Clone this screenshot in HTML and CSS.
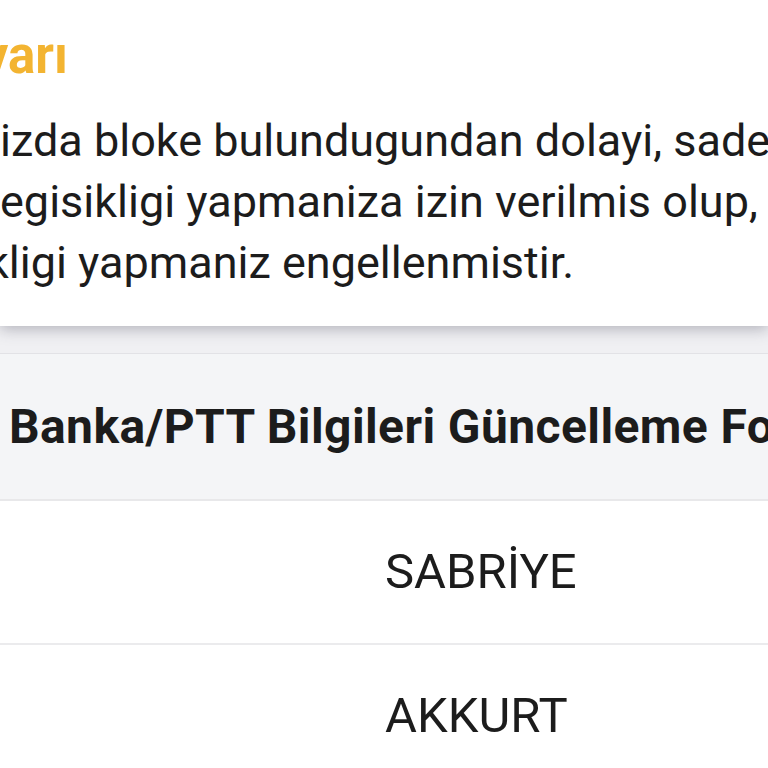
FILE: index.html
```html
<!DOCTYPE html>
<html>
  <head>
    <meta charset="UTF-8" />
    <title>Banka/PTT Bilgileri</title>
    <link rel="stylesheet" href="styles.css">
  </head>
  <body>
    <div class="screen">
      <div class="warning-card">
        <h2 class="warning-title">Uyarı</h2>
        <p class="warning-text">
          <span class="line">izda bloke bulundugundan dolayi, sadece</span>
          <span class="line">egisikligi yapmaniza izin verilmis olup,</span>
          <span class="line line-shift">kligi yapmaniz engellenmistir.</span>
        </p>
      </div>

      <div class="form-table">
        <div class="form-header">Banka/PTT Bilgileri Güncelleme Formu</div>
        <div class="form-row">
          <span class="form-label"></span>
          <span class="form-value">SABRİYE</span>
        </div>
        <div class="form-row">
          <span class="form-label"></span>
          <span class="form-value">AKKURT</span>
        </div>
      </div>
    </div>
  </body>
</html>
```

FILE: styles.css
```css
* {
  margin: 0;
  padding: 0;
  box-sizing: border-box;
}

html,
body {
  width: 768px;
  height: 768px;
  overflow: hidden;
}

body {
  font-family: Roboto, "Noto Sans", sans-serif;
  background: #f0f0f3;
  color: #1c1c1c;
}

.screen {
  width: 768px;
}

.warning-card {
  background: white;
  padding: 26px 0 33px;
  height: 326px;
  box-shadow: 0 3px 14px rgba(60, 60, 80, 0.35);
  position: relative;
  overflow: hidden;
}

.warning-title {
  font-size: 51px;
  font-weight: 700;
  line-height: 60px;
  color: #f3b431;
  margin-left: -51px;
  white-space: nowrap;
}

.warning-text {
  margin-top: 24px;
  font-size: 45px;
  line-height: 61px;
  color: #1c1c1c;
}

.warning-text .line {
  display: block;
  white-space: nowrap;
}

.warning-text .line-shift {
  margin-left: -14px;
}

.form-table {
  margin-top: 27px;
  background: white;
  border-top: 1px solid #e2e2e6;
}

.form-header {
  height: 147px;
  line-height: 146px;
  padding-left: 9px;
  background: #f4f5f7;
  border-bottom: 2px solid #e8e8ea;
  font-size: 48px;
  font-weight: 700;
  letter-spacing: 0.4px;
  white-space: nowrap;
  color: #1c1c1c;
}

.form-row {
  display: grid;
  grid-template-columns: 385px 1fr;
  height: 144px;
  line-height: 142px;
  border-bottom: 2px solid #ebebed;
  background: #fff;
}

.form-value {
  font-size: 49px;
  font-weight: 400;
  color: #1c1c1c;
  white-space: nowrap;
}
```
